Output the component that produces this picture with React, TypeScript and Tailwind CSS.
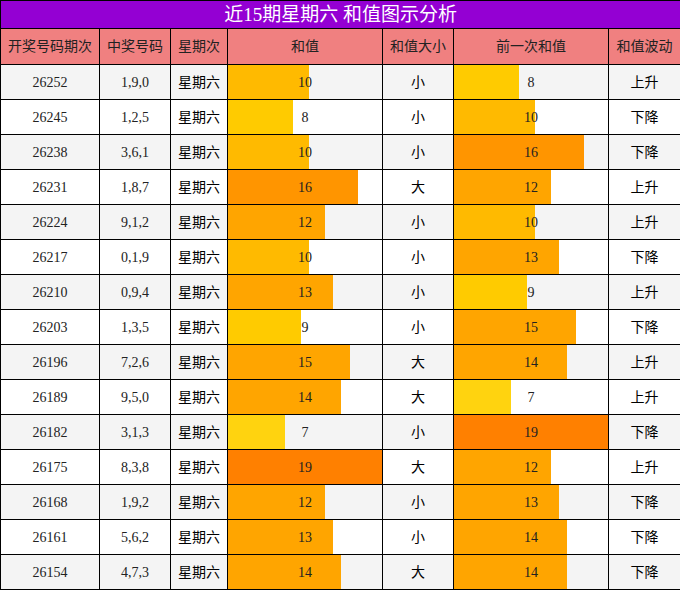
const rows: [string, string, number, string, number, string][] = [
  ["26252", "1,9,0", 10, "小", 8, "上升"],
  ["26245", "1,2,5", 8, "小", 10, "下降"],
  ["26238", "3,6,1", 10, "小", 16, "下降"],
  ["26231", "1,8,7", 16, "大", 12, "上升"],
  ["26224", "9,1,2", 12, "小", 10, "上升"],
  ["26217", "0,1,9", 10, "小", 13, "下降"],
  ["26210", "0,9,4", 13, "小", 9, "上升"],
  ["26203", "1,3,5", 9, "小", 15, "下降"],
  ["26196", "7,2,6", 15, "大", 14, "上升"],
  ["26189", "9,5,0", 14, "大", 7, "上升"],
  ["26182", "3,1,3", 7, "小", 19, "下降"],
  ["26175", "8,3,8", 19, "大", 12, "上升"],
  ["26168", "1,9,2", 12, "小", 13, "下降"],
  ["26161", "5,6,2", 13, "小", 14, "下降"],
  ["26154", "4,7,3", 14, "大", 14, "下降"],
];

const MAX = 19;

// colour steps by sum value
const barColor = (v: number) => {
  if (v <= 7) return "bg-[#ffd30f]";
  if (v <= 9) return "bg-[#ffcb00]";
  if (v <= 11) return "bg-[#ffba00]";
  if (v <= 15) return "bg-[#ffa500]";
  if (v <= 18) return "bg-[#ff9500]";
  return "bg-[#ff8000]";
};

const BarCell = ({ value }: { value: number }) => (
  <td className="relative border border-black p-0 text-center">
    <div
      className={`absolute inset-y-0 left-0 ${barColor(value)}`}
      style={{ width: `${(value / MAX) * 100}%` }}
    />
    <span className="relative">{value}</span>
  </td>
);

const cell = "border border-black p-0 text-center";

export default function App() {
  return (
    <div className="w-[680px] bg-white font-['Liberation_Serif','Noto_Sans_CJK_SC',serif] text-[14px] text-[#222]">
      <table className="w-[680px] table-fixed border-collapse border border-black">
        <colgroup>
          <col className="w-[99px]" />
          <col className="w-[71px]" />
          <col className="w-[57px]" />
          <col className="w-[155px]" />
          <col className="w-[71px]" />
          <col className="w-[155px]" />
          <col className="w-[72px]" />
        </colgroup>
        <thead>
          <tr className="h-[28px] bg-[#9400d3]">
            <th colSpan={7} className="border border-black p-0 text-center text-[19px] leading-[26px] font-normal text-white">
              近15期星期六 和值图示分析
            </th>
          </tr>
          <tr className="h-[36px] bg-[#f08080]">
            {["开奖号码期次", "中奖号码", "星期次", "和值", "和值大小", "前一次和值", "和值波动"].map((h) => (
              <th key={h} className={`${cell} font-normal`}>
                {h}
              </th>
            ))}
          </tr>
        </thead>
        <tbody>
          {rows.map(([issue, nums, sum, size, prev, trend], i) => (
            <tr key={issue} className={`h-[35px] ${i % 2 === 0 ? "bg-[#f4f4f4]" : "bg-white"}`}>
              <td className={cell}>{issue}</td>
              <td className={cell}>{nums}</td>
              <td className={`${cell} text-black`}>星期六</td>
              <BarCell value={sum} />
              <td className={`${cell} text-black`}>{size}</td>
              <BarCell value={prev} />
              <td className={`${cell} text-black`}>{trend}</td>
            </tr>
          ))}
        </tbody>
      </table>
    </div>
  );
}
